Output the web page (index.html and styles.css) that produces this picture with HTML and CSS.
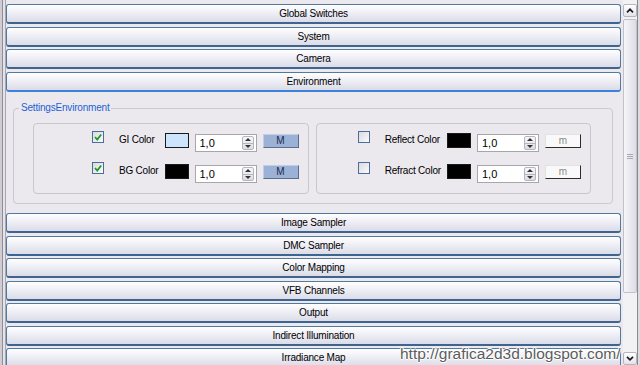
FILE: index.html
```html
<!DOCTYPE html>
<html lang="en">
<head>
  <meta charset="UTF-8">
  <title>Render Setup</title>
  <link rel="stylesheet" href="styles.css">
</head>
<body>
  <div class="ventana">
    <div class="borde-izq"></div>

    <div class="paneles">
      <div class="rollout">Global Switches</div>
      <div class="rollout">System</div>
      <div class="rollout">Camera</div>
      <div class="rollout abierto">Environment</div>

      <fieldset class="ajustes">
        <legend>SettingsEnvironment</legend>

        <div class="grupo">
          <span class="check marcado"><svg viewBox="0 0 10 10"><polyline points="2,5 4.2,7.5 8.2,2.5"/></svg></span>
          <span class="etiqueta">GI Color</span>
          <span class="muestra celeste"></span>
          <div class="spin"><span>1,0</span><span class="flechas"><i class="arriba"></i><i class="abajo"></i></span></div>
          <span class="boton-m">M</span>

          <span class="check marcado"><svg viewBox="0 0 10 10"><polyline points="2,5 4.2,7.5 8.2,2.5"/></svg></span>
          <span class="etiqueta">BG Color</span>
          <span class="muestra"></span>
          <div class="spin"><span>1,0</span><span class="flechas"><i class="arriba"></i><i class="abajo"></i></span></div>
          <span class="boton-m">M</span>
        </div>

        <div class="grupo">
          <span class="check"></span>
          <span class="etiqueta">Reflect Color</span>
          <span class="muestra"></span>
          <div class="spin"><span>1,0</span><span class="flechas"><i class="arriba"></i><i class="abajo"></i></span></div>
          <span class="boton-min">m</span>

          <span class="check"></span>
          <span class="etiqueta">Refract Color</span>
          <span class="muestra"></span>
          <div class="spin"><span>1,0</span><span class="flechas"><i class="arriba"></i><i class="abajo"></i></span></div>
          <span class="boton-min">m</span>
        </div>
      </fieldset>

      <div class="rollout">Image Sampler</div>
      <div class="rollout">DMC Sampler</div>
      <div class="rollout">Color Mapping</div>
      <div class="rollout">VFB Channels</div>
      <div class="rollout">Output</div>
      <div class="rollout">Indirect Illumination</div>
      <div class="rollout">Irradiance Map</div>
    </div>

    <div class="barra">
      <div class="btn-scroll"><svg viewBox="0 0 8 5"><polyline points="1,4.3 4,1.3 7,4.3"/></svg></div>
      <div class="pulgar"><span class="grip"></span></div>
      <div class="pista"></div>
      <div class="btn-scroll"><svg viewBox="0 0 8 5"><polyline points="1,0.8 4,3.8 7,0.8"/></svg></div>
    </div>

    <div class="borde-der"></div>
  </div>

  <div class="marca">http://grafica2d3d.blogspot.com/</div>
</body>
</html>
```

FILE: styles.css
```css
body {
  margin: 0;
  width: 640px;
  height: 365px;
  overflow: hidden;
  position: relative;
  background: #ebe9ee;
  font-family: "Liberation Sans", Arial, sans-serif;
  font-size: 10px;
  letter-spacing: -0.2px;
  color: #000;
}
.ventana {
  display: flex;
  height: 365px;
}
.borde-izq {
  width: 6px;
  flex: none;
  background: linear-gradient(to right, #cfcdd3 0 2px, #8f8e95 2px 3px, #e4e3e8 3px 5px, #a9a8ae 5px 6px);
}
.paneles {
  width: 615px;
  flex: none;
  padding-top: 4px;
  overflow: hidden;
}
.rollout {
  height: 20px;
  margin-bottom: 2.5px;
  box-sizing: border-box;
  border: 1px solid #52799f;
  border-bottom: 2px solid #3e6590;
  border-radius: 3px;
  background: linear-gradient(#ffffff, #f2f2f8 35%, #dcdce8);
  text-align: center;
  line-height: 17px;
}
.rollout.abierto {
  border-bottom-color: #3c82da;
}
.ajustes {
  margin: 10.5px 8px 9px 7px;
  padding: 9px 21px 9px 19px;
  border: 1px solid #cac9cf;
  border-radius: 4px;
  display: grid;
  grid-template-columns: 1fr 1fr;
  column-gap: 7px;
}
.ajustes legend {
  color: #1f5fd6;
  padding: 0 2px;
  margin-left: -14px;
  line-height: 12px;
}
.grupo {
  border: 1px solid #c8c7cd;
  border-radius: 4px;
  display: grid;
  grid-template-columns: repeat(5, auto);
  justify-content: end;
  align-items: start;
  column-gap: 6px;
  row-gap: 13px;
  padding: 10px 9px 10px 0;
}
.check {
  width: 12px;
  height: 12px;
  box-sizing: border-box;
  margin-top: -3px;
  margin-right: 9px;
  border: 1px solid #4b6d9b;
  background: linear-gradient(135deg, #d9d9df, #fbfbfd);
}
.check svg {
  display: block;
  width: 10px;
  height: 10px;
  fill: none;
  stroke: #1f9a1f;
  stroke-width: 1.8;
}
.etiqueta {
  line-height: 12px;
  white-space: nowrap;
}
.muestra {
  width: 24px;
  height: 15px;
  margin-top: -1px;
  box-sizing: border-box;
  border: 1px solid #1a1a1a;
  background: #000;
}
.muestra.celeste {
  background: #cde5fc;
}
.spin {
  width: 62px;
  height: 18px;
  box-sizing: border-box;
  border: 1px solid #a7a6ab;
  background: #fff;
  display: flex;
  align-items: center;
  justify-content: space-between;
  padding: 0 2px 0 4px;
  font-size: 11px;
  letter-spacing: 0;
}
.flechas {
  width: 12px;
  height: 14px;
  box-sizing: border-box;
  border: 1px solid #b5b5bd;
  border-radius: 2px;
  background: linear-gradient(#f7f7fa, #dcdce6);
  display: flex;
  flex-direction: column;
}
.flechas i {
  flex: 1;
  display: flex;
  align-items: center;
  justify-content: center;
}
.flechas i + i {
  border-top: 1px solid #b5b5bd;
}
.arriba::before {
  content: "";
  border-left: 3px solid transparent;
  border-right: 3px solid transparent;
  border-bottom: 3px solid #333;
}
.abajo::before {
  content: "";
  border-left: 3px solid transparent;
  border-right: 3px solid transparent;
  border-top: 3px solid #333;
}
.boton-m, .boton-min {
  width: 36px;
  height: 14px;
  box-sizing: border-box;
  border: 1px solid;
  text-align: center;
  line-height: 12px;
  letter-spacing: 0;
}
.boton-m {
  background: #9cb1d6;
  border-color: #c2cee5 #5c6c8c #5c6c8c #c2cee5;
  color: #1b2a4d;
}
.boton-min {
  background: #f9f9f9;
  border-color: #e2e2e2 #2c2c2c #2c2c2c #e2e2e2;
  color: #888;
}
.barra {
  width: 14px;
  flex: none;
  margin-left: 2px;
  padding-top: 4px;
  display: flex;
  flex-direction: column;
  background: #f2f2f5;
}
.btn-scroll {
  height: 13px;
  flex: none;
  box-sizing: border-box;
  border: 1px solid #b6b5bd;
  border-radius: 2px;
  background: linear-gradient(#ffffff, #e3e3eb);
  display: flex;
  align-items: center;
  justify-content: center;
}
.btn-scroll svg {
  width: 8px;
  height: 5px;
  fill: none;
  stroke: #1a1a1a;
  stroke-width: 1.7;
}
.pulgar {
  height: 274px;
  flex: none;
  margin-top: 2px;
  box-sizing: border-box;
  border: 1px solid #c2c1c9;
  border-radius: 2px;
  background: linear-gradient(to right, #f5f5f9, #dedde6);
  display: flex;
  align-items: center;
  justify-content: center;
}
.grip {
  width: 6px;
  height: 5px;
  background: repeating-linear-gradient(#a9a8b2 0 1px, transparent 1px 2px);
}
.pista {
  flex: 1;
}
.borde-der {
  width: 3px;
  flex: none;
  background: linear-gradient(to right, #8b8a92 0 1px, #dcdbe0 1px 3px);
}
.marca {
  position: absolute;
  left: 400px;
  top: 345px;
  font-size: 15.5px;
  letter-spacing: 0;
  color: #5c5c5c;
  text-shadow: -1px 0 #fff, 1px 0 #fff, 0 -1px #fff, 0 1px #fff;
}
```
